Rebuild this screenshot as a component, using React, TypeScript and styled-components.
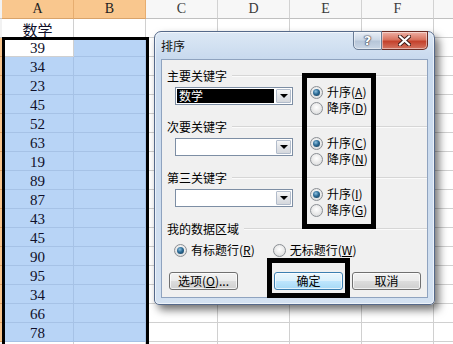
import React from 'react';
import styled, { createGlobalStyle } from 'styled-components';

const Global = createGlobalStyle`
  html, body { margin: 0; padding: 0; background: #fff; }
  body { width: 453px; height: 344px; overflow: hidden; font-family: "Noto Sans CJK SC", sans-serif; }
`;

const Page = styled.div`
  position: relative;
  width: 453px;
  height: 344px;
  overflow: hidden;
  background: #fff;
`;

/* ---------- spreadsheet ---------- */
const Sheet = styled.div`
  display: grid;
  grid-template-columns: 2px repeat(7, 72px);
  grid-auto-rows: 19px;
`;

const RowHead = styled.div<{ $sel?: boolean }>`
  box-sizing: border-box;
  background: ${p => (p.$sel ? '#f7c48c' : '#f2f2f2')};
  border-bottom: 1px solid ${p => (p.$sel ? '#e0a060' : '#c8c8c8')};
`;

const HeadCell = styled.div<{ $sel?: boolean }>`
  box-sizing: border-box;
  display: flex;
  align-items: center;
  justify-content: center;
  background: ${p => (p.$sel ? '#f9c78e' : '#f7f7f7')};
  border-right: 1px solid ${p => (p.$sel ? '#e6ad70' : '#d2d2d2')};
  border-bottom: 1px solid ${p => (p.$sel ? '#d9a36a' : '#c0c0c0')};
  font: 14px "Liberation Serif", serif;
  color: ${p => (p.$sel ? '#222' : '#3a3a3a')};
`;

type Tone = 'white' | 'sel' | 'active';

const Cell = styled.div<{ $tone: Tone }>`
  box-sizing: border-box;
  display: flex;
  align-items: center;
  justify-content: center;
  padding-top: 2px;
  background: ${p => (p.$tone === 'sel' ? '#b8d4f6' : '#fff')};
  border-right: 1px solid ${p => (p.$tone === 'sel' ? '#a6c2e6' : '#d0d0d0')};
  border-bottom: 1px solid ${p => (p.$tone === 'sel' ? '#a6c2e6' : '#d0d0d0')};
  font: 15px "Liberation Serif", "Noto Sans CJK SC", serif;
  color: #10102a;
`;

const Selection = styled.div`
  position: absolute;
  left: 2px;
  top: 37px;
  width: 147px;
  height: 330px;
  box-sizing: border-box;
  border: 3px solid #000;
  pointer-events: none;
`;

/* ---------- dialog ---------- */
const Dialog = styled.div`
  position: absolute;
  left: 154px;
  top: 31px;
  width: 281px;
  height: 274px;
  box-sizing: border-box;
  border: 1px solid #55698a;
  border-radius: 7px 7px 5px 5px;
  background: linear-gradient(#dce8f5 0px, #c9daee 26px, #cddcee 60%, #d3e1f1 100%);
  box-shadow: 4px 5px 9px rgba(0, 0, 0, 0.55), inset 0 0 0 1px rgba(255, 255, 255, 0.6);
  display: flex;
  flex-direction: column;
  padding: 0 6px 6px 6px;
  font: 12px "Noto Sans CJK SC", sans-serif;
  color: #000;
`;

const TitleBar = styled.div`
  height: 27px;
  display: flex;
  align-items: center;
  font-size: 12px;
  color: #111;
`;

const Caption = styled.div`
  position: absolute;
  top: -1px;
  right: 6px;
  display: flex;
`;

const CapButton = styled.div<{ $close?: boolean }>`
  box-sizing: border-box;
  width: ${p => (p.$close ? '46px' : '29px')};
  height: 19px;
  display: flex;
  align-items: center;
  justify-content: center;
  border: 1px solid ${p => (p.$close ? '#6b2c24' : '#6a7c95')};
  border-left: ${p => (p.$close ? 'none' : undefined)};
  border-radius: ${p => (p.$close ? '0 0 5px 0' : '0 0 0 5px')};
  background: ${p =>
    p.$close
      ? 'linear-gradient(#eeb0a4 0%, #d8735f 45%, #c4422c 55%, #d47562 100%)'
      : 'linear-gradient(#e9eff7 0%, #ccd8e6 45%, #b7c6d9 55%, #c9d6e5 100%)'};
  box-shadow: inset 0 0 0 1px rgba(255, 255, 255, 0.45);
  font: bold 13px "DejaVu Sans", sans-serif;
  color: #fff;
  text-shadow: 0 0 1px #334, 0 0 1px #334, 0 0 2px #445;
`;

const Content = styled.div`
  position: relative;
  flex: 1;
  box-sizing: border-box;
  background: #f0f0f0;
  border: 1px solid #8fa3bf;
  display: flex;
  flex-direction: column;
  padding: 9px 0 0 5px;
`;

const KeyGroup = styled.div`
  height: 51px;
  display: flex;
  flex-direction: column;
`;

const GroupHeader = styled.div`
  height: 14px;
  display: flex;
  align-items: center;
  line-height: 14px;
`;

const Rule = styled.div`
  flex: 1;
  height: 1px;
  margin-left: 5px;
  background: #d6d6d6;
  border-bottom: 1px solid #fbfbfb;
`;

const GroupBody = styled.div`
  display: flex;
  align-items: flex-start;
  padding-left: 8px;
`;

const Combo = styled.div`
  box-sizing: border-box;
  width: 118px;
  height: 18px;
  margin-top: 4px;
  border: 1px solid #7d8ea4;
  background: #fff;
  display: flex;
  align-items: center;
  padding: 1px;
`;

const ComboText = styled.div<{ $hl?: boolean }>`
  flex: 1;
  height: 14px;
  line-height: 14px;
  padding-left: 2px;
  background: ${p => (p.$hl ? '#000' : 'transparent')};
  color: ${p => (p.$hl ? '#fff' : '#000')};
  font-size: 12px;
  margin-right: 2px;
`;

const DropBtn = styled.div`
  box-sizing: border-box;
  width: 15px;
  height: 14px;
  border: 1px solid #b2bccb;
  border-radius: 1px;
  background: linear-gradient(#f7f7f7, #e2e4e8 50%, #d5d8dd);
  display: flex;
  align-items: center;
  justify-content: center;
`;

const Arrow = styled.div`
  width: 0;
  height: 0;
  border-left: 4px solid transparent;
  border-right: 4px solid transparent;
  border-top: 4px solid #000;
`;

const RadioCol = styled.div`
  margin-left: 17px;
  margin-top: 1px;
  display: flex;
  flex-direction: column;
`;

const RadioRow = styled.div<{ $gap?: number }>`
  display: flex;
  align-items: center;
  gap: ${p => p.$gap ?? 18}px;
`;

const RadioItem = styled.label`
  height: 16px;
  display: flex;
  align-items: center;
  gap: 4px;
  line-height: 16px;
  white-space: nowrap;
`;

const RadioDot = styled.span<{ $on?: boolean }>`
  box-sizing: border-box;
  width: 13px;
  height: 13px;
  border-radius: 50%;
  border: 1px solid #8b8f94;
  background: radial-gradient(circle at 50% 40%, #ffffff 0%, #e8e8e8 55%, #cfd2d6 100%);
  display: flex;
  align-items: center;
  justify-content: center;
  &::after {
    content: '';
    display: ${p => (p.$on ? 'block' : 'none')};
    width: 7px;
    height: 7px;
    border-radius: 50%;
    background: radial-gradient(circle at 40% 35%, #8fc2e0 0%, #2b6a95 45%, #16384f 100%);
  }
`;

const Acc = styled.span`
  text-decoration: underline;
`;

const DataGroup = styled.div`
  display: flex;
  flex-direction: column;
`;

const DataRadios = styled.div`
  margin-top: 6px;
  padding-left: 7px;
`;

const ButtonRow = styled.div`
  display: flex;
  gap: 9px;
  margin-top: 14px;
  padding: 0 6px 0 2px;
`;

const Button = styled.div<{ $default?: boolean; $push?: boolean }>`
  box-sizing: border-box;
  width: 69px;
  height: 18px;
  margin-right: ${p => (p.$push ? 'auto' : '0')};
  border: 1px solid ${p => (p.$default ? '#3c7fb1' : '#707070')};
  border-radius: 3px;
  background: ${p =>
    p.$default
      ? 'linear-gradient(#eaf6fd 0%, #d9f0fc 50%, #bee6fd 51%, #a7d9f5 100%)'
      : 'linear-gradient(#f2f2f2 0%, #ebebeb 50%, #dddddd 51%, #cfcfcf 100%)'};
  box-shadow: inset 0 0 0 1px rgba(255, 255, 255, 0.7);
  display: flex;
  align-items: center;
  justify-content: center;
  font-size: 12px;
  line-height: 16px;
`;

const Mark = styled.div<{ $l: number; $t: number; $w: number; $h: number }>`
  position: absolute;
  left: ${p => p.$l}px;
  top: ${p => p.$t}px;
  width: ${p => p.$w}px;
  height: ${p => p.$h}px;
  box-sizing: border-box;
  border: 5px solid #000;
  pointer-events: none;
`;

const data = [39, 34, 23, 45, 52, 63, 19, 89, 87, 43, 45, 90, 95, 34, 66, 78, 0];
const cols = ['A', 'B', 'C', 'D', 'E', 'F', 'G'];

const Radio = ({ on, text, acc }: { on?: boolean; text: string; acc: string }) => (
  <RadioItem>
    <RadioDot $on={on} />
    <span>
      {text}(<Acc>{acc}</Acc>)
    </span>
  </RadioItem>
);

const keyGroups = [
  { label: '主要关键字', value: '数学', a: 'A', d: 'D' },
  { label: '次要关键字', value: '', a: 'C', d: 'N' },
  { label: '第三关键字', value: '', a: 'I', d: 'G' },
];

export default function App() {
  return (
    <Page>
      <Global />
      <Sheet>
        <RowHead />
        {cols.map((c, i) => (
          <HeadCell key={c} $sel={i < 2}>
            {i < 6 ? c : ''}
          </HeadCell>
        ))}
        <RowHead />
        {cols.map((c, i) => (
          <Cell key={c} $tone="white">
            {i === 0 ? '数学' : ''}
          </Cell>
        ))}
        {data.map((v, r) => (
          <React.Fragment key={r}>
            <RowHead $sel={r < 16} />
            {cols.map((c, i) => {
              const tone: Tone = r >= 16 || i > 1 ? 'white' : r === 0 && i === 0 ? 'active' : 'sel';
              return (
                <Cell key={c} $tone={tone}>
                  {i === 0 && r < 16 ? v : ''}
                </Cell>
              );
            })}
          </React.Fragment>
        ))}
      </Sheet>
      <Selection />

      <Dialog>
        <TitleBar>排序</TitleBar>
        <Caption>
          <CapButton>?</CapButton>
          <CapButton $close>
            <svg width="13" height="11" viewBox="0 0 13 11">
              <path d="M2 1.5 L11 9.5 M11 1.5 L2 9.5" stroke="#3b1a16" strokeWidth="4" strokeLinecap="square" />
              <path d="M2 1.5 L11 9.5 M11 1.5 L2 9.5" stroke="#fff" strokeWidth="2.2" strokeLinecap="square" />
            </svg>
          </CapButton>
        </Caption>
        <Content>
          {keyGroups.map((g, i) => (
            <KeyGroup key={g.label}>
              <GroupHeader>
                <span>{g.label}</span>
                <Rule />
              </GroupHeader>
              <GroupBody>
                <Combo>
                  <ComboText $hl={i === 0}>{g.value}</ComboText>
                  <DropBtn>
                    <Arrow />
                  </DropBtn>
                </Combo>
                <RadioCol>
                  <Radio on text="升序" acc={g.a} />
                  <Radio text="降序" acc={g.d} />
                </RadioCol>
              </GroupBody>
            </KeyGroup>
          ))}
          <DataGroup>
            <GroupHeader>
              <span>我的数据区域</span>
              <Rule />
            </GroupHeader>
            <DataRadios>
              <RadioRow $gap={18}>
                <Radio on text="有标题行" acc="R" />
                <Radio text="无标题行" acc="W" />
              </RadioRow>
            </DataRadios>
          </DataGroup>
          <ButtonRow>
            <Button $push>
              选项(<Acc>O</Acc>)...
            </Button>
            <Button $default>确定</Button>
            <Button>取消</Button>
          </ButtonRow>
          <Mark $l={140} $t={13} $w={74} $h={156} />
          <Mark $l={105} $t={198} $w={83} $h={40} />
        </Content>
      </Dialog>
    </Page>
  );
}
